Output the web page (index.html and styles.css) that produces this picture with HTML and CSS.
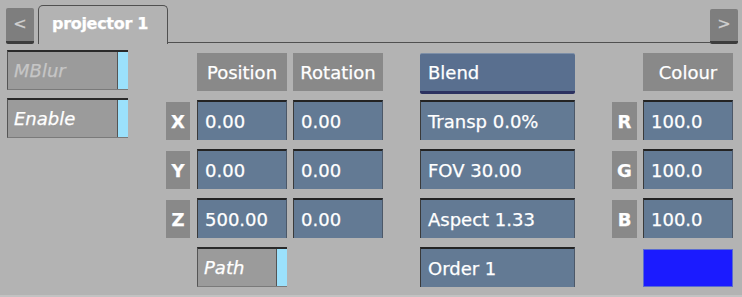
FILE: index.html
```html
<!DOCTYPE html>
<html lang="en">
<head>
    <meta charset="UTF-8">
    <meta name="viewport" content="width=device-width, initial-scale=1.0">
    <title>Projector</title>
    <link rel="stylesheet" href="styles.css">
</head>
<body>

    <div class="tabbar">
        <button class="nav-button prev">&lt;</button>
        <div class="tab">projector 1</div>
        <div class="tab-line"></div>
        <button class="nav-button next">&gt;</button>
    </div>

    <div class="panel">
        <!-- left toggles -->
        <div class="toggles">
            <div class="toggle disabled"><span>MBlur</span><i></i></div>
            <div class="toggle"><span>Enable</span><i></i></div>
        </div>

        <!-- header row -->
        <div class="label head col-pos">Position</div>
        <div class="label head col-rot">Rotation</div>
        <div class="blend col-blend">Blend</div>
        <div class="label head col-rgb">Colour</div>

        <!-- row 1 -->
        <div class="label axis col-axis">X</div>
        <div class="field col-pos">0.00</div>
        <div class="field col-rot">0.00</div>
        <div class="field col-blend">Transp 0.0%</div>
        <div class="label axis col-ch">R</div>
        <div class="field col-rgb">100.0</div>

        <!-- row 2 -->
        <div class="label axis col-axis">Y</div>
        <div class="field col-pos">0.00</div>
        <div class="field col-rot">0.00</div>
        <div class="field col-blend">FOV 30.00</div>
        <div class="label axis col-ch">G</div>
        <div class="field col-rgb">100.0</div>

        <!-- row 3 -->
        <div class="label axis col-axis">Z</div>
        <div class="field col-pos">500.00</div>
        <div class="field col-rot">0.00</div>
        <div class="field col-blend">Aspect 1.33</div>
        <div class="label axis col-ch">B</div>
        <div class="field col-rgb">100.0</div>

        <!-- row 4 -->
        <div class="toggle col-pos"><span>Path</span><i></i></div>
        <div class="field col-blend">Order 1</div>
        <div class="swatch col-rgb"></div>
    </div>

</body>
</html>
```

FILE: styles.css
```css
body {
    margin: 0;
    padding: 0;
    background-color: #b3b3b3;
    font-family: "DejaVu Sans", sans-serif;
    color: white;
    width: 742px;
    height: 295px;
    overflow: hidden;
    border-bottom: 2px solid #c2c2c2;
    -webkit-text-stroke: 0.25px currentColor;
}

/* tab bar */
.tabbar {
    display: flex;
    align-items: flex-end;
    height: 44px;
    padding-left: 6px;
    padding-right: 4px;
}

.nav-button {
    width: 28px;
    height: 36px;
    padding: 0 0 3px 0;
    background-color: #7e7e7e;
    border: none;
    border-bottom: 3px solid #3c3c3c;
    border-radius: 2px;
    color: #d0d0d0;
    font-family: "DejaVu Sans", sans-serif;
    font-size: 16px;
}

.nav-button.next {
    height: 35px;
}

.tab {
    margin-left: 4px;
    width: 130px;
    height: 39px;
    border: 1px solid #505050;
    border-bottom: none;
    border-radius: 5px 5px 0 0;
    box-sizing: border-box;
    padding: 8px 0 0 13px;
    font-size: 16px;
    font-weight: bold;
    letter-spacing: -0.3px;
}

.tab-line {
    flex: 1;
    height: 1px;
    background-color: #505050;
    margin-bottom: 1px;
}

/* main grid */
.panel {
    display: grid;
    grid-template-columns: 7px 121px 38px 24px 7px 90px 6px 90px 37px 155px 37px 25px 6px 90px;
    grid-template-rows: 38px 40px 40px 40px 40px;
    row-gap: 9px;
    margin-top: 9px;
}

.col-axis { grid-column: 4; }
.col-pos { grid-column: 6; }
.col-rot { grid-column: 8; }
.col-blend { grid-column: 10; }
.col-ch { grid-column: 12; }
.col-rgb { grid-column: 14; }

.label {
    background-color: #898989;
    display: flex;
    align-items: center;
    justify-content: center;
    font-size: 18px;
}

.label.axis {
    height: 38px;
    margin-top: 2px;
    font-weight: bold;
}

.field {
    background-color: #637a94;
    border-top: 2px solid #232323;
    border-left: 1px solid #3a3a3a;
    border-right: 1px solid #4c5868;
    display: flex;
    align-items: center;
    padding-left: 7px;
    font-size: 18px;
}

.blend {
    background-color: #596f8f;
    border-top: 1px solid #7d8fa8;
    border-bottom: 3px solid #2c3160;
    border-radius: 2px;
    display: flex;
    align-items: center;
    padding-left: 8px;
    font-size: 18px;
    margin-bottom: -3px;
}

.toggles {
    grid-column: 2;
    grid-row: 1 / 4;
    display: flex;
    flex-direction: column;
    gap: 8px;
    margin-top: -3px;
}

.toggle {
    height: 40px;
    box-sizing: border-box;
    display: flex;
    background-color: #9b9b9b;
    border-top: 2px solid #2a2a2a;
    border-left: 1px solid #555;
    border-bottom: 1px solid #7a7a7a;
    font-size: 18px;
    font-style: italic;
}

.toggle span {
    flex: 1;
    display: flex;
    align-items: center;
    padding-left: 6px;
}

.toggle i {
    width: 10px;
    background-color: #9be1fc;
    border-left: 1px solid #555;
}

.toggle.disabled span {
    color: #c6c6c6;
}

.swatch {
    background-color: #1b1bff;
    border: 1px solid #5a6cd0;
    margin-top: 2px;
}
```
